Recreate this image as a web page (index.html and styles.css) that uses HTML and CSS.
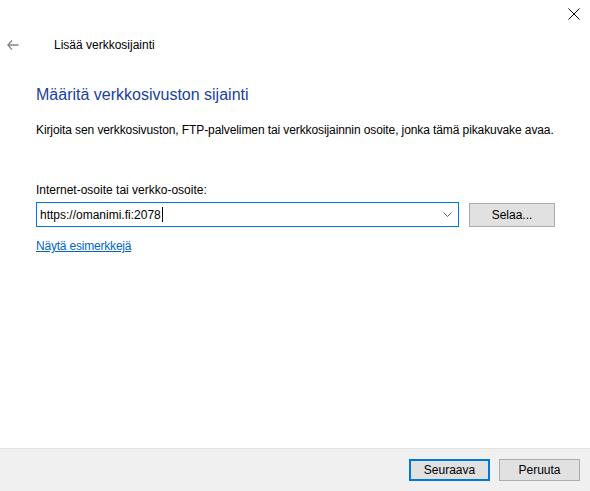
FILE: index.html
```
<!DOCTYPE html>
<html lang="fi">
<head>
<meta charset="utf-8">
<title>Lisää verkkosijainti</title>
<link rel="stylesheet" href="styles.css">
</head>
<body>
<div class="window">
  <div class="main">
    <div class="titlebar">
      <span class="close" aria-label="Sulje">
        <svg width="12" height="12" viewBox="0 0 12 12"><path d="M0.5 0.5 L11.5 11.5 M11.5 0.5 L0.5 11.5" stroke="#000" stroke-width="1" fill="none"/></svg>
      </span>
    </div>
    <div class="header">
      <span class="back">
        <svg width="12" height="10" viewBox="0 0 12 10"><path d="M5 0.5 L0.8 5 L5 9.5 M0.8 5 H11.5" stroke="#858585" stroke-width="1.3" fill="none"/></svg>
      </span>
      <span class="wiz-title">Lisää verkkosijainti</span>
    </div>
    <div class="content">
      <h1 class="instruction">Määritä verkkosivuston sijainti</h1>
      <p class="desc">Kirjoita sen verkkosivuston, FTP-palvelimen tai verkkosijainnin osoite, jonka tämä pikakuvake avaa.</p>
      <div class="label">Internet-osoite tai verkko-osoite:</div>
      <div class="row">
        <div class="combo">
          <span class="combo-text">https://omanimi.fi:2078<span class="caret"></span></span>
          <svg class="chev" width="9" height="5" viewBox="0 0 9 5"><path d="M0.5 0.5 L4.5 4.5 L8.5 0.5" stroke="#606060" stroke-width="1" fill="none"/></svg>
        </div>
        <span class="btn browse">Selaa...</span>
      </div>
      <a class="link" href="#">Näytä esimerkkejä</a>
    </div>
  </div>
  <div class="footer">
    <span class="btn default">Seuraava</span>
    <span class="btn">Peruuta</span>
  </div>
</div>
</body>
</html>
```
FILE: styles.css
```
* { box-sizing: border-box; }
html, body { margin: 0; padding: 0; }
body {
  width: 590px;
  height: 491px;
  background: #fff;
  font-family: "Liberation Sans", Arial, sans-serif;
  font-size: 12px;
  color: #000;
  overflow: hidden;
}
.window {
  display: flex;
  flex-direction: column;
  height: 491px;
}
.main { flex: 1; }
.titlebar {
  height: 30px;
  display: flex;
  justify-content: flex-end;
  align-items: flex-start;
  padding: 8px 10px 0 0;
}
.close { display: block; width: 12px; height: 12px; }
.close svg { display: block; }
.header {
  height: 30px;
  display: flex;
  align-items: center;
}
.back {
  width: 54px;
  padding-left: 7px;
  display: flex;
  align-items: center;
}
.back svg { display: block; }
.wiz-title { line-height: 16px; }
.content { padding: 0 0 0 36px; }
.instruction {
  margin: 24px 0 0 0;
  font-weight: normal;
  font-size: 16px;
  line-height: 22px;
  color: #1a3fa3;
}
.desc {
  margin: 16px 0 0 0;
  line-height: 16px;
  letter-spacing: -0.1px;
}
.label {
  margin-top: 44px;
  line-height: 16px;
}
.row {
  margin-top: 4px;
  display: flex;
  align-items: center;
  gap: 10px;
}
.combo {
  width: 423px;
  height: 25px;
  border: 1px solid #0078d7;
  display: flex;
  align-items: center;
  justify-content: space-between;
  padding: 0 6px 0 3px;
}
.combo-text { line-height: 16px; display: flex; align-items: center; }
.caret {
  display: inline-block;
  width: 0;
  height: 15px;
  border-left: 1px solid #000;
  margin-left: 1px;
}
.chev { display: block; }
.btn {
  display: flex;
  align-items: center;
  justify-content: center;
  width: 81px;
  height: 22px;
  background: #e1e1e1;
  border: 1px solid #adadad;
  line-height: 16px;
}
.browse { width: 86px; height: 24px; }
.link {
  display: inline-block;
  margin-top: 11px;
  color: #0066cc;
  text-decoration: underline;
  line-height: 16px;
  letter-spacing: -0.2px;
}
.footer {
  height: 43px;
  background: #f0f0f0;
  border-top: 1px solid #e3e3e3;
  display: flex;
  justify-content: flex-end;
  align-items: flex-start;
  gap: 9px;
  padding: 10px 10px 0 0;
}
.default { border: 2px solid #0078d7; }
```
